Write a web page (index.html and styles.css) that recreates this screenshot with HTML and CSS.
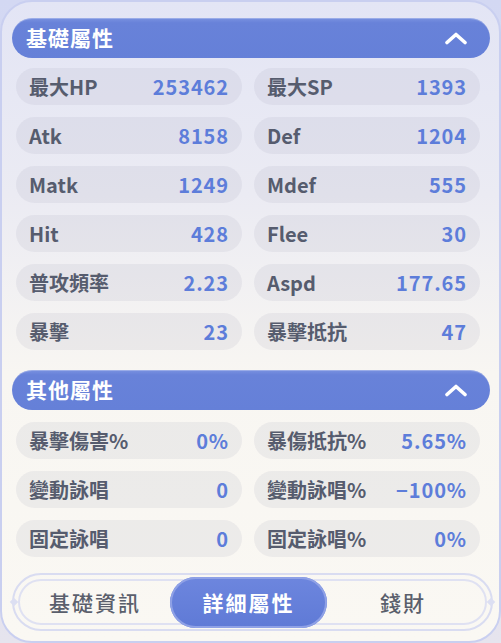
FILE: index.html
```html
<!DOCTYPE html>
<html lang="zh-Hant">
<head>
<meta charset="utf-8">
<link rel="stylesheet" href="styles.css">
</head>
<body>
<div class="panel">
  <div class="section-head">
    <span class="head-title">基礎屬性</span>
    <svg class="chev" width="24" height="14" viewBox="0 0 24 14"><path d="M3 11.5 L12 3.5 L21 11.5" fill="none" stroke="#fff" stroke-width="3.6" stroke-linecap="round" stroke-linejoin="round"/></svg>
  </div>
  <div class="grid">
    <div class="cell"><span class="lbl">最大HP</span><span class="val">253462</span></div>
    <div class="cell"><span class="lbl">最大SP</span><span class="val">1393</span></div>
    <div class="cell"><span class="lbl">Atk</span><span class="val">8158</span></div>
    <div class="cell"><span class="lbl">Def</span><span class="val">1204</span></div>
    <div class="cell"><span class="lbl">Matk</span><span class="val">1249</span></div>
    <div class="cell"><span class="lbl">Mdef</span><span class="val">555</span></div>
    <div class="cell"><span class="lbl">Hit</span><span class="val">428</span></div>
    <div class="cell"><span class="lbl">Flee</span><span class="val">30</span></div>
    <div class="cell"><span class="lbl">普攻頻率</span><span class="val">2.23</span></div>
    <div class="cell"><span class="lbl">Aspd</span><span class="val">177.65</span></div>
    <div class="cell"><span class="lbl">暴擊</span><span class="val">23</span></div>
    <div class="cell"><span class="lbl">暴擊抵抗</span><span class="val">47</span></div>
  </div>
  <div class="section-head second">
    <span class="head-title">其他屬性</span>
    <svg class="chev" width="24" height="14" viewBox="0 0 24 14"><path d="M3 11.5 L12 3.5 L21 11.5" fill="none" stroke="#fff" stroke-width="3.6" stroke-linecap="round" stroke-linejoin="round"/></svg>
  </div>
  <div class="grid">
    <div class="cell"><span class="lbl">暴擊傷害%</span><span class="val">0%</span></div>
    <div class="cell"><span class="lbl">暴傷抵抗%</span><span class="val">5.65%</span></div>
    <div class="cell"><span class="lbl">變動詠唱</span><span class="val">0</span></div>
    <div class="cell"><span class="lbl">變動詠唱%</span><span class="val">−100%</span></div>
    <div class="cell"><span class="lbl">固定詠唱</span><span class="val">0</span></div>
    <div class="cell"><span class="lbl">固定詠唱%</span><span class="val">0%</span></div>
  </div>
  <div class="tabs">
    <div class="tabs-inner">
      <span class="tab first">基礎資訊</span>
      <span class="tab active">詳細屬性</span>
      <span class="tab last">錢財</span>
    </div>
    <span class="tip tip-l"></span>
    <span class="tip tip-r"></span>
  </div>
</div>
</body>
</html>
```

FILE: styles.css
```css
html, body {
  margin: 0;
  padding: 0;
}
body {
  width: 501px;
  height: 643px;
  overflow: hidden;
  background: linear-gradient(180deg, #d3d8f3 0%, #e6e4ee 100%);
  font-family: "Noto Sans CJK TC", "Noto Sans", sans-serif;
}
.panel {
  box-sizing: border-box;
  width: 501px;
  height: 643px;
  border-radius: 32px;
  border: 2px solid #c9cff0;
  background: linear-gradient(180deg, #e3e5f5 0%, #ebebf3 30%, #f8f6f2 58%, #faf8f3 100%);
  padding: 16px 0 0 10px;
}
.section-head {
  width: 478px;
  height: 40px;
  box-sizing: border-box;
  border-radius: 20px;
  background: linear-gradient(180deg, #7a92e0 0%, #6882d9 12%, #6580d8 100%);
  box-shadow: inset 0 1px 0 rgba(255,255,255,0.25);
  display: flex;
  align-items: center;
  justify-content: space-between;
  padding: 0 22px 0 14px;
}
.section-head.second {
  margin-top: 20px;
}
.head-title {
  color: #fff;
  font-size: 21px;
  font-weight: 700;
  letter-spacing: 1px;
  line-height: 1;
  margin-top: -1px;
}
.chev {
  display: block;
}
.grid {
  display: grid;
  grid-template-columns: 226px 226px;
  column-gap: 12px;
  row-gap: 12px;
  margin: 10px 0 0 4px;
}
.section-head.second + .grid {
  margin-top: 12px;
}
.cell {
  height: 37px;
  border-radius: 19px;
  background: rgba(150, 150, 170, 0.12);
  display: flex;
  align-items: center;
  justify-content: space-between;
  padding: 0 13px 0 13px;
}
.lbl {
  color: #565c6e;
  font-size: 20px;
  font-weight: 700;
  line-height: 1;
}
.val {
  color: #5d7dda;
  font-size: 20px;
  font-weight: 700;
  letter-spacing: 0.9px;
  line-height: 1;
}
.tabs {
  position: relative;
  margin-top: 16px;
  width: 481px;
  height: 58px;
  box-sizing: border-box;
  border: 2px solid #d9dcf1;
  border-radius: 29px;
  padding: 4px;
}
.tabs-inner {
  height: 100%;
  box-sizing: border-box;
  border: 2px solid #dfe1f2;
  border-radius: 24px;
  display: flex;
  align-items: center;
}
.tab {
  color: #5a5f6c;
  font-size: 21px;
  font-weight: 500;
  letter-spacing: 2px;
  text-align: center;
}
.tab.first {
  width: 150px;
}
.tab.last {
  width: 152px;
}
.tab.active {
  color: #fff;
  font-weight: 700;
  width: 157px;
  height: 51px;
  line-height: 51px;
  border-radius: 26px;
  background: linear-gradient(180deg, #6d86de 0%, #5f7ad6 100%);
  box-shadow: 0 0 0 2px #8fa1e6 inset;
}
.tip {
  position: absolute;
  top: 24px;
  width: 6px;
  height: 6px;
  background: #dcdff2;
  transform: rotate(45deg);
}
.tip-l { left: -3px; }
.tip-r { right: -3px; }
```
